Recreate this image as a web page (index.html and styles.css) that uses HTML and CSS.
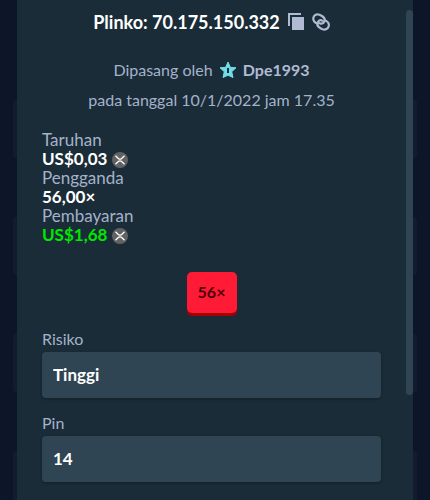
FILE: index.html
```html
<!DOCTYPE html>
<html lang="id">
<head>
  <meta charset="UTF-8">
  <meta name="viewport" content="width=device-width, initial-scale=1.0">
  <link rel="stylesheet" href="styles.css">
  <title>Plinko</title>
</head>
<body>

  <div class="side left">
    <div class="ghost"></div>
    <div class="ghost"></div>
    <div class="ghost"></div>
    <div class="ghost"></div>
  </div>

  <main class="modal">
    <div class="content">
      <div class="title">
        <h1>Plinko: 70.175.150.332</h1>
        <button class="icon-btn" type="button" aria-label="Salin">
          <svg width="16" height="18" viewBox="0 0 16 18" fill="#b1bad3">
            <path d="M0 0h13v2H2v11H0z"/>
            <rect x="4" y="4" width="12" height="13"/>
          </svg>
        </button>
        <button class="icon-btn" type="button" aria-label="Tautan">
          <svg width="18" height="18" viewBox="0 0 18 18" fill="none" stroke="#b1bad3" stroke-width="2.200" stroke-linecap="round">
            <path d="M5.500 10.500C2.500 10 .9 7.300 1.400 4.800C2 2 4.800 .8 7.500 1.700L9.500 2.700C12.300 4.200 13.200 6.600 12.200 8.700C11.300 10.600 9.300 11 7.600 10.200"/>
            <path d="M13.300 7.500C16 8.500 17.300 11 16.700 13.200C16 15.900 13.300 17.200 10.500 16.200L8.500 15.200C5.700 13.700 4.800 11.300 5.800 9.200C6.700 7.400 8.700 6.900 10.400 7.700"/>
          </svg>
        </button>
      </div>

      <div class="info">
        <p>Dipasang oleh
          <svg class="star" width="18" height="18" viewBox="0 0 18 18">
            <path fill="#6fdde7" stroke="#6fdde7" stroke-linejoin="round" d="M9 1l2.300 5.300 5.700.5-4.300 3.900 1.300 5.800L9 14.200l-5 2.300 1.300-5.800L1 6.800l5.700-.5z"/>
            <path fill="#1a2c38" d="M8 7h2v5H8z"/>
          </svg>
          <a class="user" href="#">Dpe1993</a>
        </p>
        <p>pada tanggal 10/1/2022 jam 17.35</p>
      </div>

      <dl class="stats">
        <dt>Taruhan</dt>
        <dd>US$0,03
          <svg class="coin" width="16" height="16" viewBox="0 0 16 16">
            <circle cx="8" cy="8" r="8" fill="#626262"/>
            <path fill="none" stroke="#fff" stroke-width="1.300" d="M3.500 3.700L6.300 6.400Q8 7.900 9.700 6.400L12.500 3.700M3.500 12.300L6.300 9.600Q8 8.100 9.700 9.600L12.500 12.300"/>
          </svg>
        </dd>
        <dt>Pengganda</dt>
        <dd>56,00×</dd>
        <dt>Pembayaran</dt>
        <dd class="win">US$1,68
          <svg class="coin" width="16" height="16" viewBox="0 0 16 16">
            <circle cx="8" cy="8" r="8" fill="#626262"/>
            <path fill="none" stroke="#fff" stroke-width="1.300" d="M3.500 3.700L6.300 6.400Q8 7.900 9.700 6.400L12.500 3.700M3.500 12.300L6.300 9.600Q8 8.100 9.700 9.600L12.500 12.300"/>
          </svg>
        </dd>
      </dl>

      <div class="result">56×</div>

      <div class="field">
        <label for="risk">Risiko</label>
        <input id="risk" type="text" value="Tinggi" readonly>
      </div>
      <div class="field">
        <label for="pins">Pin</label>
        <input id="pins" type="text" value="14" readonly>
      </div>
    </div>
    <div class="scrollbar"></div>
  </main>

  <div class="side right">
    <div class="ghost"></div>
    <div class="ghost"></div>
    <div class="ghost"></div>
    <div class="ghost"></div>
  </div>

</body>
</html>
```

FILE: styles.css
```css
* {
  margin: 0;
  padding: 0;
  box-sizing: border-box;
}

body {
  display: flex;
  height: 100vh;
  overflow: hidden;
  background: #0d1628;
  color: #a5b2ca;
  font-family: Lato, "Liberation Sans", sans-serif;
  font-size: 16px;
}

/* page behind the modal */
.side {
  width: 17px;
  padding-top: 100px;
  display: flex;
  flex-direction: column;
  gap: 59px;
  overflow: hidden;
}

.left {
  align-items: flex-end;
}

.ghost {
  flex: none;
  width: 4px;
  height: 58px;
  background: #121c2e;
}

.left .ghost {
  border-radius: 3px 0 0 3px;
}

.right .ghost {
  border-radius: 0 3px 3px 0;
}

.modal {
  flex: 1;
  display: flex;
  background: #1a2c38;
}

.content {
  flex: 1;
  padding: 10px 25px;
}

.scrollbar {
  width: 7px;
  height: 77vh;
  margin-top: 10px;
  border-radius: 4px;
  background: #2f4553;
}

.title {
  display: flex;
  align-items: center;
  justify-content: center;
  gap: 8px;
  height: 24px;
}

.title h1 {
  font-size: 18px;
  line-height: 24px;
  font-weight: 700;
  color: #fff;
}

.icon-btn {
  display: flex;
  border: none;
  background: none;
  cursor: pointer;
}

.info {
  margin-top: 21px;
  text-align: center;
  line-height: 30px;
}

.star {
  margin: 0 2px;
  vertical-align: -3px;
}

.user {
  color: #b1bad3;
  font-weight: 700;
  text-decoration: none;
}

.stats {
  margin-top: 15px;
  font-size: 17px;
  line-height: 19px;
}

.stats dd {
  height: 19px;
  color: #fff;
  font-weight: 700;
}

.stats .win {
  color: #00e701;
}

.coin {
  vertical-align: -3px;
}

.result {
  width: 50px;
  height: 41px;
  margin: 28px auto 16px;
  border-radius: 5px;
  background: #ff1a35;
  box-shadow: 0 3px 0 #a60004;
  color: #4d0008;
  font-weight: 700;
  line-height: 40px;
  text-align: center;
}

.field {
  display: flex;
  flex-direction: column;
  gap: 3px;
  margin-bottom: 15px;
}

.field label {
  line-height: 20px;
}

.field input {
  width: 100%;
  height: 46px;
  padding: 0 11px 2px;
  border: none;
  border-radius: 4px;
  outline: none;
  background: #2f4553;
  box-shadow: 0 1px 3px rgba(0, 0, 0, .3);
  color: #fff;
  font: inherit;
  font-size: 17px;
  font-weight: 700;
}
```
